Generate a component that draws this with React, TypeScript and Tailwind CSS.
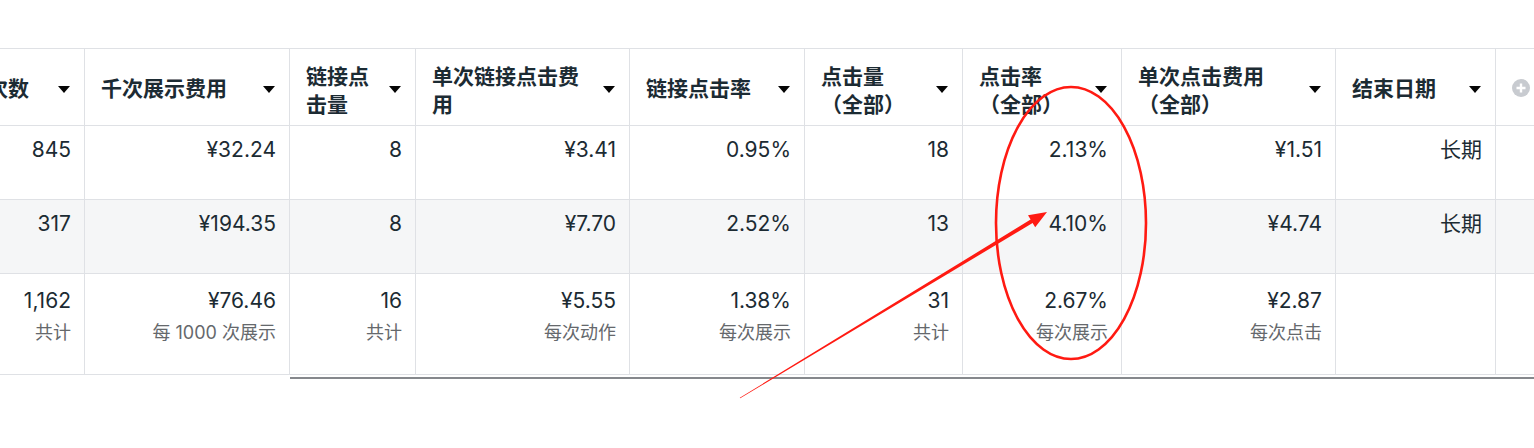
import React from 'react';

interface Col {
    w: string;
    title: string[];
}

const cols: Col[] = [
    { w: 'w-[156px] -ml-[71px]', title: ['展示次数'] },
    { w: 'w-[205px]', title: ['千次展示费用'] },
    { w: 'w-[126px]', title: ['链接点', '击量'] },
    { w: 'w-[214px]', title: ['单次链接点击费', '用'] },
    { w: 'w-[175px]', title: ['链接点击率'] },
    { w: 'w-[158px]', title: ['点击量', '（全部）'] },
    { w: 'w-[159px]', title: ['点击率', '（全部）'] },
    { w: 'w-[214px]', title: ['单次点击费用', '（全部）'] },
    { w: 'w-[160px]', title: ['结束日期'] },
];

const rows: string[][] = [
    ['845', '¥32.24', '8', '¥3.41', '0.95%', '18', '2.13%', '¥1.51', '长期'],
    ['317', '¥194.35', '8', '¥7.70', '2.52%', '13', '4.10%', '¥4.74', '长期'],
];

const totals: [string, string][] = [
    ['1,162', '共计'],
    ['¥76.46', '每 1000 次展示'],
    ['16', '共计'],
    ['¥5.55', '每次动作'],
    ['1.38%', '每次展示'],
    ['31', '共计'],
    ['2.67%', '每次展示'],
    ['¥2.87', '每次点击'],
    ['', ''],
];

function SortCaret() {
    return (
        <svg width="12" height="7" viewBox="0 0 12 7" className="shrink-0 ml-2">
            <path d="M0 0 L12 0 L6 7 Z" fill="#050505" />
        </svg>
    );
}

export default function App() {
    return (
        <div className="relative w-[1534px] h-[448px] bg-white overflow-hidden font-[Inter,'Noto_Sans_CJK_SC',sans-serif] text-[#1c2b33]">
            <div className="pt-[48px]">
                <div className="border-t border-[#dfe1e5]">
                    {/* header */}
                    <div className="flex h-[77px]">
                        {cols.map((c, i) => (
                            <div key={i} className={`${c.w} shrink-0 flex items-center pt-[4px] pl-[16px] pr-[14px] border-r border-b border-[#dfe1e5]`}>
                                <div className={`flex-1 text-[21px] leading-[28px] font-bold whitespace-nowrap ${c.title.length > 1 ? 'pt-[3px]' : ''}`}>
                                    {c.title.map((t, j) => (
                                        <div key={j}>{t}</div>
                                    ))}
                                </div>
                                <SortCaret />
                            </div>
                        ))}
                        <div className="flex-1 flex items-center pt-[2px] pl-[16px] border-b border-[#dfe1e5]">
                            <svg width="18" height="18" viewBox="0 0 18 18">
                                <circle cx="9" cy="9" r="9" fill="#c8cbd0" />
                                <path d="M9 4.5 V13.5 M4.5 9 H13.5" stroke="#fff" strokeWidth="2.4" />
                            </svg>
                        </div>
                    </div>

                    {/* data rows */}
                    {rows.map((r, ri) => (
                        <div key={ri} className={`flex h-[74px] ${ri === 1 ? 'bg-[#f5f6f7]' : 'bg-white'}`}>
                            {cols.map((c, i) => (
                                <div key={i} className={`${c.w} shrink-0 pt-[10px] pr-[13px] text-right text-[21px] leading-[28px] border-r border-b border-[#dfe1e5]`}>
                                    {r[i]}
                                </div>
                            ))}
                            <div className="flex-1 border-b border-[#dfe1e5]" />
                        </div>
                    ))}

                    {/* totals */}
                    <div className="flex h-[101px]">
                        {cols.map((c, i) => (
                            <div key={i} className={`${c.w} shrink-0 pt-[13px] pr-[13px] text-right border-r border-b border-[#dfe1e5]`}>
                                <div className="text-[21px] leading-[28px] h-[28px]">{totals[i][0]}</div>
                                <div className="mt-[4px] text-[18px] leading-[28px] text-[#65686c]">{totals[i][1]}</div>
                            </div>
                        ))}
                        <div className="flex-1 border-b border-[#dfe1e5]" />
                    </div>
                </div>
                <div className="mt-[2px] ml-[290px] h-[2px] bg-[#85888c]" />
            </div>

            {/* annotation */}
            <svg className="absolute inset-0 pointer-events-none" width="1534" height="448" viewBox="0 0 1534 448">
                <ellipse cx="1071" cy="223" rx="75" ry="136" fill="none" stroke="#ff1a12" strokeWidth="2.6" />
                <polygon
                    points="740.2,398.3 1032.6,223 1035.2,227.3 1047,212 1028,215.3 1030.6,219.6 739.8,397.7"
                    fill="#ff1a12"
                />
            </svg>
        </div>
    );
}
